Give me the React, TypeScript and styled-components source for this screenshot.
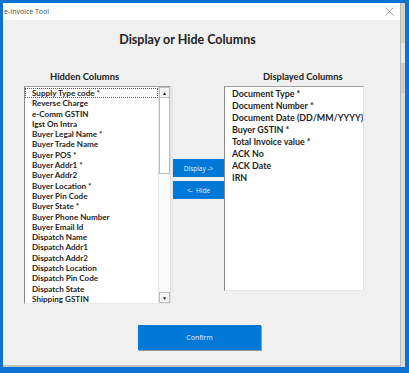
import React, { FC } from "react";
import styled, { createGlobalStyle } from "styled-components";

const hiddenColumns = [
  "Supply Type code *",
  "Reverse Charge",
  "e-Comm GSTIN",
  "Igst On Intra",
  "Buyer Legal Name *",
  "Buyer Trade Name",
  "Buyer POS *",
  "Buyer Addr1 *",
  "Buyer Addr2",
  "Buyer Location *",
  "Buyer Pin Code",
  "Buyer State *",
  "Buyer Phone Number",
  "Buyer Email Id",
  "Dispatch Name",
  "Dispatch Addr1",
  "Dispatch Addr2",
  "Dispatch Location",
  "Dispatch Pin Code",
  "Dispatch State",
  "Shipping GSTIN",
];

const displayedColumns = [
  "Document Type *",
  "Document Number *",
  "Document Date (DD/MM/YYYY)",
  "Buyer GSTIN *",
  "Total Invoice value *",
  "ACK No",
  "ACK Date",
  "IRN",
];

const GlobalStyle = createGlobalStyle`
  html, body {
    margin: 0;
    padding: 0;
    background: #0b72d2;
  }
  * {
    box-sizing: border-box;
  }
`;

const Screen = styled.div`
  width: 409px;
  height: 373px;
  background: #0b72d2;
  padding: 3px 0 0 3px;
  display: flex;
  overflow: hidden;
`;

// slice of the spreadsheet showing behind the dialog
const Backdrop = styled.div`
  width: 4px;
  height: 364px;
  margin-right: 4px;
  background: linear-gradient(
    #d9d2c0 0 40px,
    #e8e8e8 40px 60px,
    #cfc9d8 60px 90px,
    #dcdcdc 90px
  );
`;

const Window = styled.div`
  width: 398px;
  height: 364px;
  display: flex;
  flex-direction: column;
  background: #f0f0f0;
  border-right: 1px solid #b9b9b9;
  border-bottom: 2px solid #c4c4c4;
  font-family: Lato, "Open Sans", sans-serif;
`;

const TitleBar = styled.div`
  height: 17px;
  flex: none;
  background: #fff;
  display: flex;
  align-items: center;
  justify-content: space-between;
  padding: 0 6px 0 1px;
  font-family: "Open Sans", sans-serif;
  font-size: 7px;
  color: #444;
`;

const CloseIcon = styled.svg`
  width: 9px;
  height: 9px;
`;

const Body = styled.div`
  flex: 1;
  display: flex;
  flex-direction: column;
`;

const Heading = styled.div`
  margin-top: 12px;
  height: 16px;
  line-height: 16px;
  text-align: center;
  padding-right: 28px;
  font-size: 12.5px;
  font-weight: 700;
  color: #222;
`;

const Columns = styled.div`
  margin-top: 23px;
  padding-left: 21px;
  display: flex;
  align-items: flex-start;
`;

const Side = styled.div`
  display: flex;
  flex-direction: column;
`;

const ColumnTitle = styled.div<{ $indent: number }>`
  height: 11px;
  line-height: 11px;
  margin-bottom: 4px;
  padding-left: ${(p) => p.$indent}px;
  font-size: 9.4px;
  font-weight: 700;
  color: #222;
  white-space: nowrap;
`;

const ListBox = styled.div<{ $width: number; $height: number }>`
  width: ${(p) => p.$width}px;
  height: ${(p) => p.$height}px;
  background: #fff;
  border-top: 1px solid #a0a0a0;
  border-left: 1px solid #8a8a8a;
  border-right: 1px solid #e0e0e0;
  border-bottom: 1px solid #e8e8e8;
  display: flex;
  overflow: hidden;
`;

const Items = styled.ul<{ $row: number; $size: number; $top: number }>`
  flex: 1;
  list-style: none;
  margin: 0;
  padding: ${(p) => p.$top}px 0 0 7px;
  font-size: ${(p) => p.$size}px;
  font-weight: 700;
  color: #1e1e1e;

  li {
    height: ${(p) => p.$row}px;
    line-height: ${(p) => p.$row}px;
    white-space: nowrap;
  }
`;

const FocusItem = styled.li`
  outline: 1px dotted #555;
  outline-offset: -1px;
  margin-left: -7px;
  padding-left: 7px;
`;

const ScrollBar = styled.div`
  width: 12px;
  display: flex;
  flex-direction: column;
  background: #fafafa;
  border-left: 1px solid #e4e4e4;
`;

const ScrollArrow = styled.div`
  height: 11px;
  display: flex;
  align-items: center;
  justify-content: center;
  background: #f4f4f4;
  border: 1px solid #bdbdbd;
  font-size: 5px;
  color: #222;
`;

const ScrollThumb = styled.div`
  height: 76px;
  border: 1px solid #bcbcbc;
  border-top: none;
  background: #fff;
`;

const ScrollTrack = styled.div`
  flex: 1;
`;

const Buttons = styled.div`
  width: 52px;
  height: 206px;
  margin-top: 15px;
  margin-left: 1px;
  padding-top: 73px;
  display: flex;
  flex-direction: column;
  gap: 4px;
  border-left: 1px solid #e2e2e2;
`;

const MoveButton = styled.button`
  height: 18px;
  border: none;
  padding: 0;
  background: #0078d7;
  color: #e8f1fb;
  font-family: "Open Sans", sans-serif;
  font-size: 6.5px;
  text-align: center;
`;

const Footer = styled.div`
  margin-top: 21px;
  display: flex;
  justify-content: center;
  padding-right: 4px;
`;

const ConfirmButton = styled.button`
  width: 123px;
  height: 25px;
  border: none;
  padding: 0;
  background: #0078d7;
  box-shadow: 1px 1px 0 #9a9a9a;
  color: #e8f1fb;
  font-family: "Open Sans", sans-serif;
  font-size: 7px;
`;

const App: FC = () => {
  return (
    <>
      <GlobalStyle />
      <Screen>
        <Window>
          <TitleBar>
            <span>e-Invoice Tool</span>
            <CloseIcon viewBox="0 0 9 9">
              <path d="M0.5 0.5 L8.5 8.5 M8.5 0.5 L0.5 8.5" stroke="#8a8a8a" strokeWidth="0.8" />
            </CloseIcon>
          </TitleBar>
          <Body>
            <Heading>Display or Hide Columns</Heading>
            <Columns>
              <Side>
                <ColumnTitle $indent={26}>Hidden Columns</ColumnTitle>
                <ListBox $width={147} $height={218}>
                  <Items $row={10.3} $size={8.1} $top={1}>
                    {hiddenColumns.map((name, idx) =>
                      idx === 0 ? (
                        <FocusItem key={name}>{name}</FocusItem>
                      ) : (
                        <li key={name}>{name}</li>
                      )
                    )}
                  </Items>
                  <ScrollBar>
                    <ScrollArrow>▲</ScrollArrow>
                    <ScrollThumb />
                    <ScrollTrack />
                    <ScrollArrow>▼</ScrollArrow>
                  </ScrollBar>
                </ListBox>
              </Side>
              <Buttons>
                <MoveButton>Display -&gt;</MoveButton>
                <MoveButton>&lt;-&nbsp; Hide</MoveButton>
              </Buttons>
              <Side>
                <ColumnTitle $indent={39}>Displayed Columns</ColumnTitle>
                <ListBox $width={140} $height={205}>
                  <Items $row={12} $size={8.9} $top={1}>
                    {displayedColumns.map((name) => (
                      <li key={name}>{name}</li>
                    ))}
                  </Items>
                </ListBox>
              </Side>
            </Columns>
            <Footer>
              <ConfirmButton>Confirm</ConfirmButton>
            </Footer>
          </Body>
        </Window>
        <Backdrop />
      </Screen>
    </>
  );
};

export default App;
